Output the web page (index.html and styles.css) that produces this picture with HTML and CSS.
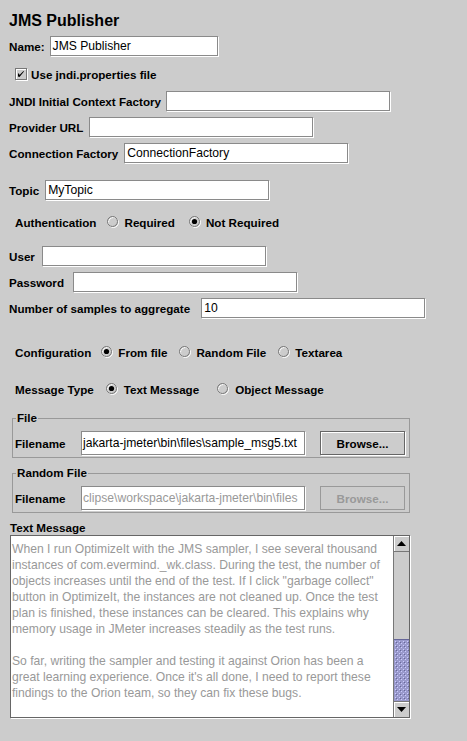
FILE: index.html
```html
<!DOCTYPE html>
<html>
<head>
<meta charset="utf-8">
<title>JMS Publisher</title>
<link rel="stylesheet" href="styles.css">
</head>
<body>
<div class="panel">
  <div class="title">JMS Publisher</div>

  <div class="row r-name">
    <span class="lbl">Name:</span>
    <div class="field w-name">JMS Publisher</div>
  </div>

  <div class="row r-check">
    <span class="checkbox"><svg width="10" height="10" viewBox="0 0 10 10"><path d="M2 4.5 L2 7.5 L3.5 8 L8 2.5 L7.5 2 L3.5 6 L3 4.5 Z" fill="#000"/></svg></span>
    <span class="lbl">Use jndi.properties file</span>
  </div>

  <div class="row r-jndi">
    <span class="lbl">JNDI Initial Context Factory</span>
    <div class="field"></div>
  </div>

  <div class="row r-provider">
    <span class="lbl">Provider URL</span>
    <div class="field"></div>
  </div>

  <div class="row r-conn">
    <span class="lbl">Connection Factory</span>
    <div class="field">ConnectionFactory</div>
  </div>

  <div class="row r-topic">
    <span class="lbl">Topic</span>
    <div class="field">MyTopic</div>
  </div>

  <div class="row r-auth radios">
    <span class="lbl group-lbl">Authentication</span>
    <span class="option">
      <svg class="radio" width="13" height="13" viewBox="0 0 13 13"><circle cx="6.5" cy="6.5" r="5" fill="none" stroke="#fff"/><circle cx="5.5" cy="5.5" r="5" fill="none" stroke="#777"/></svg>
      <span class="lbl">Required</span>
    </span>
    <span class="option">
      <svg class="radio" width="13" height="13" viewBox="0 0 13 13"><circle cx="6.5" cy="6.5" r="5" fill="none" stroke="#fff"/><circle cx="5.5" cy="5.5" r="5" fill="none" stroke="#777"/><circle cx="5.5" cy="5.5" r="2.6" fill="#000"/></svg>
      <span class="lbl">Not Required</span>
    </span>
  </div>

  <div class="row r-user">
    <span class="lbl">User</span>
    <div class="field"></div>
  </div>

  <div class="row r-pass">
    <span class="lbl">Password</span>
    <div class="field"></div>
  </div>

  <div class="row r-num">
    <span class="lbl">Number of samples to aggregate</span>
    <div class="field">10</div>
  </div>

  <div class="row r-config radios">
    <span class="lbl group-lbl">Configuration</span>
    <span class="option">
      <svg class="radio" width="13" height="13" viewBox="0 0 13 13"><circle cx="6.5" cy="6.5" r="5" fill="none" stroke="#fff"/><circle cx="5.5" cy="5.5" r="5" fill="none" stroke="#777"/><circle cx="5.5" cy="5.5" r="2.6" fill="#000"/></svg>
      <span class="lbl">From file</span>
    </span>
    <span class="option">
      <svg class="radio" width="13" height="13" viewBox="0 0 13 13"><circle cx="6.5" cy="6.5" r="5" fill="none" stroke="#fff"/><circle cx="5.5" cy="5.5" r="5" fill="none" stroke="#777"/></svg>
      <span class="lbl">Random File</span>
    </span>
    <span class="option">
      <svg class="radio" width="13" height="13" viewBox="0 0 13 13"><circle cx="6.5" cy="6.5" r="5" fill="none" stroke="#fff"/><circle cx="5.5" cy="5.5" r="5" fill="none" stroke="#777"/></svg>
      <span class="lbl">Textarea</span>
    </span>
  </div>

  <div class="row r-msgtype radios">
    <span class="lbl group-lbl">Message Type</span>
    <span class="option">
      <svg class="radio" width="13" height="13" viewBox="0 0 13 13"><circle cx="6.5" cy="6.5" r="5" fill="none" stroke="#fff"/><circle cx="5.5" cy="5.5" r="5" fill="none" stroke="#777"/><circle cx="5.5" cy="5.5" r="2.6" fill="#000"/></svg>
      <span class="lbl">Text Message</span>
    </span>
    <span class="option">
      <svg class="radio" width="13" height="13" viewBox="0 0 13 13"><circle cx="6.5" cy="6.5" r="5" fill="none" stroke="#fff"/><circle cx="5.5" cy="5.5" r="5" fill="none" stroke="#777"/></svg>
      <span class="lbl">Object Message</span>
    </span>
  </div>

  <fieldset class="group g-file">
    <legend class="lbl">File</legend>
    <div class="file-row">
      <span class="lbl file-lbl">Filename</span>
      <div class="field file-field">jakarta-jmeter\bin\files\sample_msg5.txt</div>
      <button class="btn" type="button">Browse...</button>
    </div>
  </fieldset>

  <fieldset class="group g-random">
    <legend class="lbl">Random File</legend>
    <div class="file-row">
      <span class="lbl file-lbl">Filename</span>
      <div class="field file-field disabled">clipse\workspace\jakarta-jmeter\bin\files</div>
      <button class="btn disabled" type="button">Browse...</button>
    </div>
  </fieldset>

  <div class="lbl ta-lbl">Text Message</div>
  <div class="textarea">
    <div class="ta-text">When I run OptimizeIt with the JMS sampler, I see several thousand<br>instances of com.evermind._wk.class. During the test, the number of<br>objects increases until the end of the test. If I click "garbage collect"<br>button in OptimizeIt, the instances are not cleaned up. Once the test<br>plan is finished, these instances can be cleared. This explains why<br>memory usage in JMeter increases steadily as the test runs.<br><br>So far, writing the sampler and testing it against Orion has been a<br>great learning experience. Once it's all done, I need to report these<br>findings to the Orion team, so they can fix these bugs.</div>
    <div class="scrollbar">
      <div class="sb-btn sb-up"><svg width="9" height="5" viewBox="0 0 9 5"><path d="M0 5 L4.5 0 L9 5 Z" fill="#000"/></svg></div>
      <div class="sb-track"><div class="sb-thumb"></div></div>
      <div class="sb-btn sb-down"><svg width="9" height="5" viewBox="0 0 9 5"><path d="M0 0 L9 0 L4.5 5 Z" fill="#000"/></svg></div>
    </div>
  </div>
</div>
</body>
</html>
```

FILE: styles.css
```css
html, body {
  margin: 0;
  padding: 0;
}
body {
  background: #cccccc;
  font-family: "Liberation Sans", Arial, sans-serif;
  font-size: 12.15px;
  color: #000;
  width: 467px;
  height: 741px;
  overflow: hidden;
}
.panel {
  padding-left: 9px;
  display: flex;
  flex-direction: column;
  align-items: flex-start;
}
.title {
  font-size: 16px;
  font-weight: bold;
  line-height: 20px;
  margin-top: 11px;
}
.row {
  display: flex;
  align-items: center;
  height: 20px;
}
.lbl {
  font-size: 11.65px;
  font-weight: bold;
  white-space: nowrap;
}
.field {
  box-sizing: border-box;
  height: 20px;
  width: 224px;
  margin-left: 5px;
  padding: 0 2px;
  background: #fff;
  border: 1px solid #8a8a8a;
  box-shadow: 1px 1px 0 #fff;
  line-height: 18px;
  white-space: nowrap;
  overflow: hidden;
}
.w-name { width: 168px; }

.r-name { margin-top: 5px; }
.r-check { margin-top: 8px; padding-left: 6px; }
.r-jndi { margin-top: 7px; }
.r-provider { margin-top: 6px; }
.r-conn { margin-top: 6px; }
.r-topic { margin-top: 17px; }
.r-auth { margin-top: 12px; }
.r-user { margin-top: 14px; }
.r-pass { margin-top: 6px; }
.r-num { margin-top: 6px; }
.r-config { margin-top: 24px; }
.r-msgtype { margin-top: 17px; }

.r-provider .field,
.r-conn .field,
.r-topic .field { margin-left: 6px; }
.r-user .field { margin-left: 7px; }
.r-pass .field { margin-left: 9px; }
.r-num .field { margin-left: 11px; }

.checkbox {
  box-sizing: border-box;
  width: 12px;
  height: 12px;
  border: 1px solid #777;
  box-shadow: inset 1px 1px 0 #fff, 1px 1px 0 #fff;
  display: flex;
  align-items: center;
  justify-content: center;
  margin-right: 4px;
}
.checkbox svg { display: block; }

.radios { padding-left: 6px; }
.group-lbl { margin-right: 10px; }
.option {
  display: flex;
  align-items: center;
  gap: 4px;
  margin-right: 14px;
}
.r-auth .group-lbl { margin-right: 11px; }
.r-config .option { margin-right: 12px; }
.r-msgtype .group-lbl { margin-right: 12px; }
.r-msgtype .option { gap: 5px; margin-right: 18px; }
.radio { display: block; }

.group {
  box-sizing: border-box;
  width: 398px;
  margin: 12px 0 0 3px;
  padding: 6px 0 2px 2px;
  border: 1px solid #999;
  min-width: 0;
}
.g-random { margin-top: 8px; }
.group legend {
  padding: 0 1px;
  margin-left: 1px;
  line-height: 14px;
}
.file-row {
  display: flex;
  align-items: center;
}
.file-lbl { width: 66px; }
.file-field {
  height: 24px;
  margin-left: 0;
  padding: 0 0 0 1px;
  line-height: 22px;
}
.file-field.disabled { color: #999; }

.btn {
  box-sizing: border-box;
  width: 85px;
  height: 24px;
  margin-left: 15px;
  padding: 0;
  background: #cccccc;
  border: 1px solid #666;
  box-shadow: inset 1px 1px 0 #fff, 1px 1px 0 #fff;
  font-family: "Liberation Sans", Arial, sans-serif;
  font-size: 11.65px;
  font-weight: bold;
  color: #000;
}
.btn.disabled {
  border-color: #999;
  box-shadow: none;
  color: #999;
}

.ta-lbl {
  margin: 8px 0 0 1px;
  line-height: 14px;
}
.textarea {
  box-sizing: border-box;
  width: 400px;
  height: 183px;
  margin-left: 1px;
  background: #fff;
  border: 1px solid #666;
  box-shadow: 1px 1px 0 #fff;
  display: flex;
}
.ta-text {
  flex: 1;
  padding: 5px 0 0 1px;
  line-height: 16px;
  color: #999;
  white-space: nowrap;
  overflow: hidden;
}
.scrollbar {
  box-sizing: border-box;
  width: 16px;
  display: flex;
  flex-direction: column;
  background: #cccccc;
  border-left: 1px solid #777;
}
.sb-btn {
  box-sizing: border-box;
  height: 16px;
  display: flex;
  align-items: center;
  justify-content: center;
  background: #cccccc;
  box-shadow: inset 1px 1px 0 #fff;
}
.sb-btn svg { display: block; }
.sb-up { border-bottom: 1px solid #777; }
.sb-down { border-top: 1px solid #777; }
.sb-track {
  flex: 1;
  display: flex;
  flex-direction: column;
  justify-content: flex-end;
}
.sb-thumb {
  box-sizing: border-box;
  height: 62px;
  border-top: 1px solid #666699;
  background:
    conic-gradient(at 1px 1px, transparent 75%, #ccccff 0) 1px 1px / 4px 4px,
    conic-gradient(at 1px 1px, transparent 75%, #ccccff 0) 3px 3px / 4px 4px,
    conic-gradient(at 1px 1px, transparent 75%, #666699 0) 2px 2px / 4px 4px,
    #9999cc;
}
```
